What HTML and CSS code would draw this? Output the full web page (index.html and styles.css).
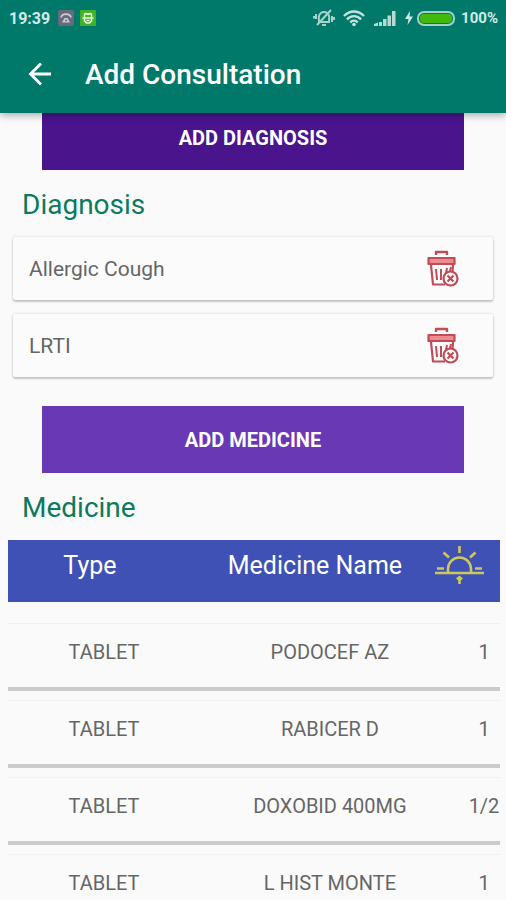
FILE: index.html
```html
<!DOCTYPE html>
<html lang="en">
<head>
<meta charset="utf-8">
<meta name="viewport" content="width=device-width, initial-scale=1">
<title>Add Consultation</title>
<link rel="stylesheet" href="styles.css">
</head>
<body>
<svg class="sprite" aria-hidden="true">
  <symbol id="trash" viewBox="0 0 32 38">
    <g fill="none" stroke="#c04c58" stroke-width="2.200" stroke-linejoin="round">
      <path d="M9 5V2h11v3" stroke-width="2.400"/>
      <path d="M1.500 8h26v6h-26z" fill="#ee8b91"/>
      <path d="M4 15l2 19.500h12M26 15l-.4 6"/>
      <path d="M9 19l1 11M14 19v11M20 18l-1 5M24 17l-1 4" stroke-width="2"/>
      <circle cx="23.500" cy="28.500" r="7" fill="#fafafa"/>
      <path d="M20.500 25.500l6 6M26.500 25.500l-6 6"/>
    </g>
  </symbol>
</svg>
<header class="top">
  <div class="status">
    <span class="clock">19:39</span>
    <svg class="badge" width="16" height="16" viewBox="0 0 16 16" aria-hidden="true">
      <rect width="16" height="16" rx="2" fill="#67697c"/>
      <path d="M3 7.500c1-4.500 9-4.500 10 0" fill="none" stroke="#c9cad2" stroke-width="1.800"/>
      <path d="M4 12.500l2.500-4.500h3l2.500 4.500z" fill="#c9cad2"/><circle cx="8" cy="10.500" r="1" fill="#67697c"/>
    </svg>
    <svg class="badge" width="16" height="16" viewBox="0 0 16 16" aria-hidden="true">
      <rect width="16" height="16" rx="1" fill="#43b02a"/>
      <path d="M4.500 7.500V5c0-2 2-1.500 3.500-.8 1.500-.7 3.500-1.200 3.500.8v2.500M2.500 8h11M4.500 8.500v2.500l2 2h3l2-2V8.500M6.500 10.500h3" fill="none" stroke="#e2f7d8" stroke-width="1.600"/>
    </svg>
    <span class="spacer"></span>
    <svg class="mute" width="22" height="18" viewBox="0 0 22 18" fill="none" stroke="#a9d2cc" stroke-width="2" aria-hidden="true">
      <path d="M6 13c0-2-.5-4 0-6 1-3 3-4 5-4s4 1 5 4c.5 2 0 4 0 6z"/>
      <path d="M9 16h4M3 5v5M1 7v2.500M19 7v6M21 8v3M4 16L18 1"/>
    </svg>
    <svg class="wifi" width="22" height="17" viewBox="0 0 22 17" fill="none" stroke="#c5e2de" stroke-width="2.400" aria-hidden="true">
      <path d="M1 6c6-6 14-6 20 0M4 9.500c4-4.500 10-4.500 14 0M7.300 12.500c2-2.500 5.400-2.500 7.400 0"/>
      <circle cx="11" cy="14.500" r="1.800" fill="#c5e2de" stroke="none"/>
    </svg>
    <svg class="signal" width="22" height="16" viewBox="0 0 22 16" fill="#b5d9d3" aria-hidden="true">
      <path d="M0 16v-2l4-1.500V16zM5 12h3v4H5zM9 9h3.500v7H9zM13.500 5.500H17V16h-3.500zM18 1h3.500v15H18z"/>
    </svg>
    <svg class="bolt" width="8" height="14" viewBox="0 0 8 14" fill="#d3e9e6" aria-hidden="true"><path d="M5 0L0 8h3.500L2.500 14 8 5.500H4.500z"/></svg>
    <svg class="battery" width="38" height="15" viewBox="0 0 38 15" aria-hidden="true">
      <rect x="1" y="1" width="36" height="13" rx="6" fill="#00796b" stroke="#a7cfc9" stroke-width="2"/>
      <rect x="3" y="3" width="32" height="9" rx="4" fill="#43b80c"/>
    </svg>
    <span class="percent">100%</span>
  </div>
  <div class="appbar">
    <a class="back" href="#" aria-label="Back">
      <svg width="24" height="24" viewBox="0 0 24 24" fill="none" stroke="#fff" stroke-width="2.800" aria-hidden="true"><path d="M23 11H2.500M13 .5L2.500 11 13 21.500"/></svg>
    </a>
    <h1>Add Consultation</h1>
  </div>
</header>
<main>
  <button class="add dark" type="button">ADD DIAGNOSIS</button>
  <h2>Diagnosis</h2>
  <ul class="cards">
    <li><span>Allergic Cough</span><button type="button" aria-label="Delete Allergic Cough"><svg width="32" height="38" aria-hidden="true"><use href="#trash"/></svg></button></li>
    <li><span>LRTI</span><button type="button" aria-label="Delete LRTI"><svg width="32" height="38" aria-hidden="true"><use href="#trash"/></svg></button></li>
  </ul>
  <button class="add" type="button">ADD MEDICINE</button>
  <h2>Medicine</h2>
  <table>
    <colgroup><col class="type"><col><col class="extra"><col class="dose"></colgroup>
    <thead>
      <tr>
        <th class="kind" scope="col">Type</th>
        <th scope="col">Medicine Name</th>
        <th class="morning" scope="col" colspan="2" aria-label="Morning">
          <svg width="49" height="38" viewBox="0 0 49 38" fill="none" stroke="#cbc95b" stroke-width="2.600" aria-hidden="true">
            <path d="M0 27h49M2 22.500h7M40 22.500h7M13 26v-3a11.500 11.500 0 0 1 23 0v3M24.500 0v7M8.500 6.500l5.500 5M40.500 6.500l-5.500 5M24.500 31v7"/>
            <path d="M21 32.500l3.500-3 3.500 3-3.500 3z" fill="#cbc95b" stroke="none"/>
          </svg>
        </th>
      </tr>
    </thead>
    <tbody>
      <tr><td>TABLET</td><td colspan="2">PODOCEF AZ</td><td class="count">1</td></tr>
      <tr><td>TABLET</td><td colspan="2">RABICER D</td><td class="count">1</td></tr>
      <tr><td>TABLET</td><td colspan="2">DOXOBID 400MG</td><td class="count">1/2</td></tr>
      <tr><td>TABLET</td><td colspan="2">L HIST MONTE</td><td class="count">1</td></tr>
    </tbody>
  </table>
</main>
</body>
</html>
```
FILE: styles.css
```css
* { box-sizing: border-box; }

body {
  display: flex;
  flex-direction: column;
  height: 100vh;
  margin: 0;
  overflow: hidden;
  background: #fafafa;
  color: #666;
  font-family: Roboto, "Liberation Sans", sans-serif;
}

.sprite { position: absolute; width: 0; height: 0; }
svg { display: block; flex: none; }
button { padding: 0; border: 0; font: inherit; cursor: pointer; }

.top {
  flex: none;
  z-index: 1;
  background: #00796b;
  color: #fff;
  box-shadow: 0 2px 8px rgba(0, 0, 0, 0.35);
}

.status {
  display: flex;
  align-items: center;
  height: 36px;
  padding: 0 8px 0 9px;
  color: #d3e9e6;
  font-size: 16px;
  font-weight: 700;
}
.clock { margin-right: 8px; }
.badge { margin-right: 6px; }
.spacer { flex: 1; }
.mute { margin-right: 8px; }
.wifi { margin-right: 9px; }
.signal { margin-right: 9px; }
.bolt { margin-right: 4px; }
.battery { margin-right: 6px; }
.percent { font-size: 15px; }

.appbar {
  display: flex;
  align-items: center;
  height: 77px;
  padding: 0 28px;
}
.back { margin-right: 33px; }
h1 { margin: 0; font-size: 28px; font-weight: 500; }

main {
  flex: 1;
  min-height: 0;
  overflow-y: auto;
  scrollbar-width: none;
}

.add {
  display: block;
  width: calc(100% - 84px);
  height: 67px;
  margin: 0 auto;
  background: #6939b5;
  color: #fff;
  font-size: 20px;
  font-weight: 700;
}
.dark { margin-top: -10px; background: #4a148c; padding-top: 2px; }

h2 {
  margin: 0;
  padding: 3px 22px 0;
  color: #0b7a5d;
  font-size: 28px;
  font-weight: 400;
  line-height: 64px;
}

.cards {
  display: grid;
  gap: 14px;
  margin: 0 13px 29px;
  padding: 0;
  list-style: none;
}
.cards li {
  display: flex;
  align-items: center;
  justify-content: space-between;
  height: 63px;
  padding: 0 34px 0 16px;
  border-radius: 2px;
  background: #fbfbfb;
  box-shadow: 0 2px 2px rgba(0, 0, 0, 0.18), 0 0 3px rgba(0, 0, 0, 0.16);
  font-size: 21px;
}
.cards button { background: none; }

table {
  width: calc(100% - 14px);
  margin: 0 6px 0 8px;
  border-collapse: separate;
  border-spacing: 0;
  table-layout: fixed;
}
.type { width: 39%; }
.extra { width: 30px; }
.dose { width: 40px; }

th {
  height: 74px;
  padding: 0 0 12px;
  border-bottom: 12px solid transparent;
  background: #3f51b5;
  background-clip: padding-box;
  color: #fff;
  font-size: 25px;
  font-weight: 400;
}
.kind { padding-right: 28px; }
.morning { padding-left: 5px; }

td {
  height: 77px;
  padding: 3px 0 0;
  border-bottom: 4px solid #cbcbcb;
  background: linear-gradient(#f1f1f1, #f1f1f1) 0 9px / 100% 1px no-repeat;
  font-size: 20px;
  text-align: center;
}
.count { padding-left: 8px; }
```
